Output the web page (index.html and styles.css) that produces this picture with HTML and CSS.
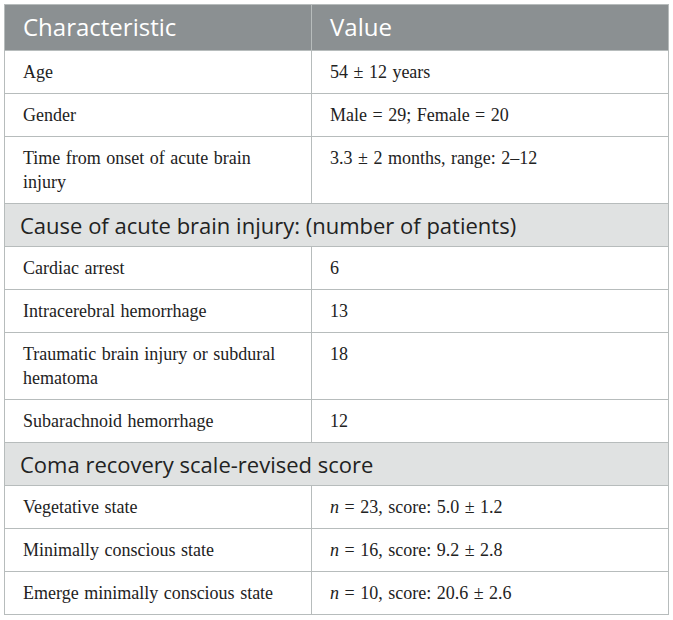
FILE: index.html
```html
<!DOCTYPE html>
<html lang="en">

<head>
  <meta charset="UTF-8">
  <meta name="viewport" content="width=device-width, initial-scale=1.0">
  <title>Patient characteristics</title>
  <link rel="stylesheet" href="styles.css">
</head>

<body>
  <table class="char-table">
    <thead>
      <tr>
        <th class="col-name">Characteristic</th>
        <th>Value</th>
      </tr>
    </thead>
    <tbody>
      <tr>
        <td>Age</td>
        <td>54 ± 12 years</td>
      </tr>
      <tr>
        <td>Gender</td>
        <td>Male = 29; Female = 20</td>
      </tr>
      <tr>
        <td>Time from onset of acute brain injury</td>
        <td>3.3 ± 2 months, range: 2–12</td>
      </tr>
      <tr class="section">
        <td colspan="2">Cause of acute brain injury: (number of patients)</td>
      </tr>
      <tr>
        <td>Cardiac arrest</td>
        <td>6</td>
      </tr>
      <tr>
        <td>Intracerebral hemorrhage</td>
        <td>13</td>
      </tr>
      <tr>
        <td>Traumatic brain injury or subdural hematoma</td>
        <td>18</td>
      </tr>
      <tr>
        <td>Subarachnoid hemorrhage</td>
        <td>12</td>
      </tr>
      <tr class="section">
        <td colspan="2">Coma recovery scale-revised score</td>
      </tr>
      <tr>
        <td>Vegetative state</td>
        <td><i>n</i> = 23, score: 5.0 ± 1.2</td>
      </tr>
      <tr>
        <td>Minimally conscious state</td>
        <td><i>n</i> = 16, score: 9.2 ± 2.8</td>
      </tr>
      <tr>
        <td>Emerge minimally conscious state</td>
        <td><i>n</i> = 10, score: 20.6 ± 2.6</td>
      </tr>
    </tbody>
  </table>
</body>

</html>
```

FILE: styles.css
```css
body {
  margin: 0;
  padding: 4px;
  background-color: #fff;
}

.char-table {
  width: 665px;
  border-collapse: collapse;
  border: 1px solid #b7bcbc;
  table-layout: fixed;
}

.char-table th {
  background-color: #8b9092;
  color: #fff;
  font-family: "Open Sans", sans-serif;
  font-weight: normal;
  font-size: 24px;
  line-height: 28px;
  text-align: left;
  padding: 8px 18px 9px 18px;
  border: 1px solid #b7bcbc;
}

.col-name {
  width: 270px;
}

.char-table td {
  font-family: "Liberation Serif", serif;
  font-size: 18px;
  line-height: 24px;
  color: #222;
  padding: 9px 24px 9px 18px;
  border: 1px solid #b7bcbc;
  vertical-align: top;
  word-spacing: 1px;
}

.char-table .section td {
  background-color: #e0e2e2;
  font-family: "Open Sans", sans-serif;
  font-size: 22px;
  line-height: 26px;
  color: #222;
  padding: 8px 15px;
  word-spacing: 0;
}
```
